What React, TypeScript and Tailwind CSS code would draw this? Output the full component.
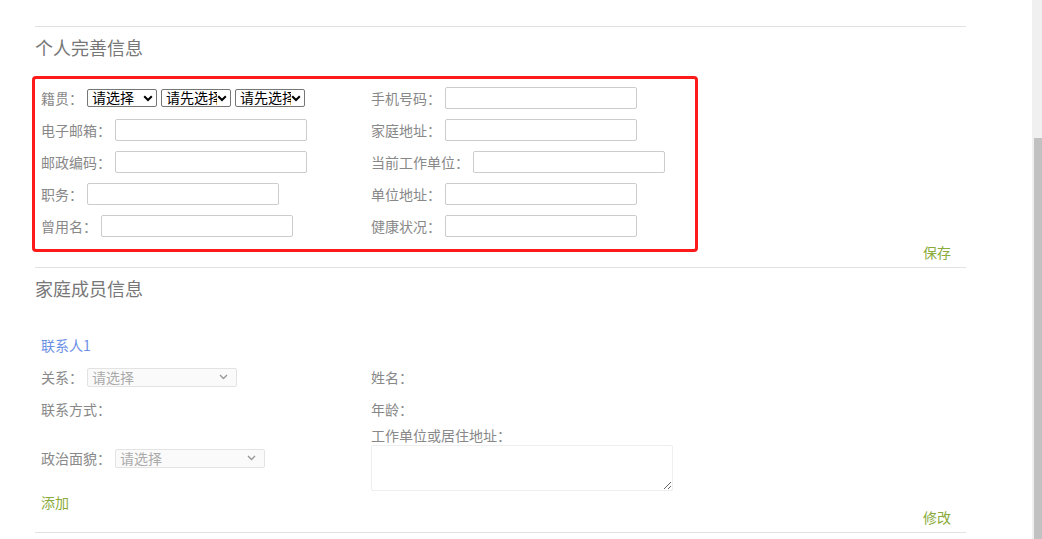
import React from 'react';

const font = { fontFamily: '"Microsoft YaHei", "Noto Sans CJK SC", "Noto Sans", sans-serif' };

const leftFields = [
  { label: '电子邮箱：' },
  { label: '邮政编码：' },
  { label: '职务：' },
  { label: '曾用名：' },
];

const rightFields = [
  { label: '手机号码：' },
  { label: '家庭地址：' },
  { label: '当前工作单位：' },
  { label: '单位地址：' },
  { label: '健康状况：' },
];

function TextInput() {
  return (
    <input
      type="text"
      className="h-[22px] w-[192px] rounded-[2px] border border-[#cccccc] bg-white px-1 text-[14px] outline-none"
    />
  );
}

function Row({ label, children }: { label: string; children: React.ReactNode }) {
  return (
    <div className="flex h-[32px] items-center">
      <span className="mr-[4px] whitespace-nowrap text-[14px] text-[#888888]">{label}</span>
      {children}
    </div>
  );
}

function BlackSelect({ text }: { text: string }) {
  return (
    <div className="flex h-[18px] w-[70px] items-center overflow-hidden rounded-[2px] border border-[#767676] bg-white pl-[4px] pr-[3px]">
      <span className="h-[18px] flex-1 overflow-hidden whitespace-nowrap text-[14px] leading-[17px] text-black">{text}</span>
      <svg width="10" height="7" viewBox="0 0 10 7" fill="none" className="shrink-0">
        <path d="M1.2 1.2L5 5l3.8-3.8" stroke="#000000" strokeWidth="2" />
      </svg>
    </div>
  );
}

function GreySelect({ width }: { width: string }) {
  return (
    <div
      className={`flex h-[19px] ${width} items-center justify-between rounded-[2px] border border-[#e3e3e3] bg-[#fafafa] pl-[4px] pr-[8px] text-[14px] text-[#aaaaaa]`}
    >
      <span>请选择</span>
      <svg width="9" height="6" viewBox="0 0 9 6" fill="none">
        <path d="M1 1l3.5 3.5L8 1" stroke="#999999" strokeWidth="1.4" />
      </svg>
    </div>
  );
}

export default function App() {
  return (
    <div className="flex h-[539px] w-[1042px] overflow-hidden bg-white" style={font}>
      <div className="flex-1 pl-[35px]">
        <div className="w-[931px]">
          {/* 个人完善信息 */}
          <div className="mt-[26px] border-t border-[#e2e2e2]" />
          <div className="flex h-[40px] items-center text-[18px] text-[#777777]">个人完善信息</div>

          <div className="ml-[-3px] mt-[9px] w-[666px] rounded-[4px] border-[3px] border-[#ff1a1a] pb-[7px] pl-[6px] pt-[3px]">
            <div className="grid grid-cols-[330px_1fr]">
              <div>
                <Row label="籍贯：">
                  <div className="flex gap-[4px]">
                    <BlackSelect text="请选择" />
                    <BlackSelect text="请先选择" />
                    <BlackSelect text="请先选择" />
                  </div>
                </Row>
                {leftFields.map((f) => (
                  <Row key={f.label} label={f.label}>
                    <TextInput />
                  </Row>
                ))}
              </div>
              <div>
                {rightFields.map((f) => (
                  <Row key={f.label} label={f.label}>
                    <TextInput />
                  </Row>
                ))}
              </div>
            </div>
          </div>

          <div className="mb-[5px] mt-[-10px] flex h-[20px] items-center justify-end pr-[15px] text-[14px] text-[#8aaa3a]">
            保存
          </div>
          <div className="border-t border-[#e2e2e2]" />

          {/* 家庭成员信息 */}
          <div className="flex h-[40px] items-center text-[18px] text-[#777777]">家庭成员信息</div>

          <div className="pl-[6px]">
            <div className="mt-[27px] flex h-[20px] items-center text-[14px] text-[#6b8fe6]">联系人1</div>
            <div className="mt-[6px] grid grid-cols-[330px_1fr] text-[14px] text-[#888888]">
              <div>
                <Row label="关系：">
                  <GreySelect width="w-[150px]" />
                </Row>
                <div className="flex h-[32px] items-center">联系方式：</div>
                <div className="mt-[17px]">
                  <Row label="政治面貌：">
                    <GreySelect width="w-[150px]" />
                  </Row>
                </div>
                <div className="mt-[18px] flex h-[20px] items-center text-[#8aaa3a]">添加</div>
              </div>
              <div>
                <div className="flex h-[32px] items-center">姓名：</div>
                <div className="flex h-[32px] items-center">年龄：</div>
                <div className="flex h-[20px] items-center">工作单位或居住地址：</div>
                <textarea className="block h-[46px] w-[302px] rounded-[2px] border border-[#eeeeee] bg-white outline-none" />
              </div>
            </div>
          </div>

          <div className="mb-[5px] mt-[-5px] flex h-[20px] items-center justify-end pr-[15px] text-[14px] text-[#8aaa3a]">
            修改
          </div>
          <div className="border-t border-[#e2e2e2]" />
        </div>
      </div>

      {/* scrollbar */}
      <div className="flex w-[10px] flex-col bg-[#f0f0f0] pl-[2px] pt-[138px]">
        <div className="flex-1 bg-[#c1c1c1]" />
      </div>
    </div>
  );
}
